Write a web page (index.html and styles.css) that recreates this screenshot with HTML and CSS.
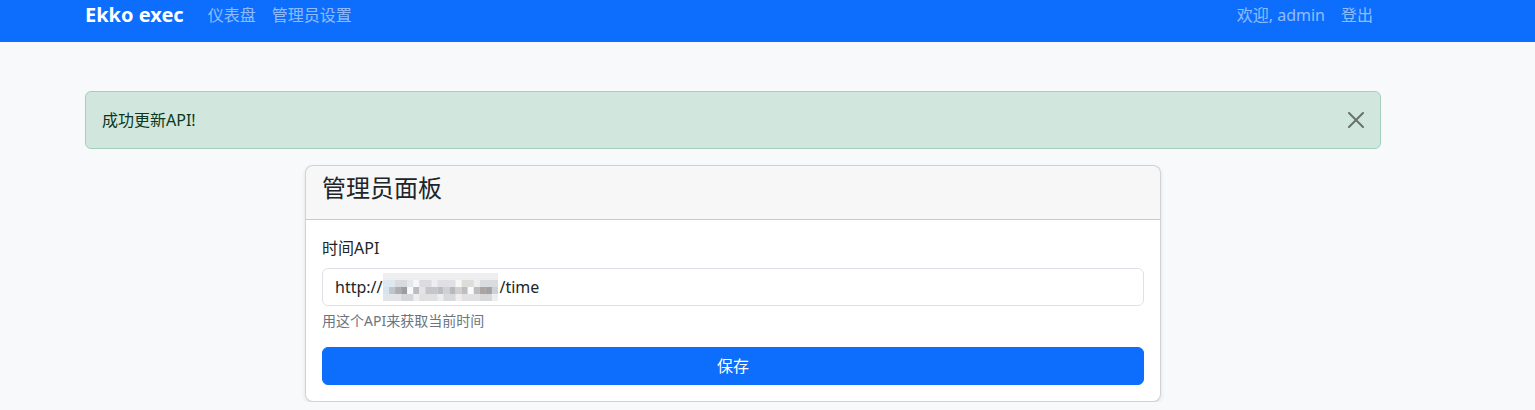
FILE: index.html
```html
<!DOCTYPE html>
<html lang="zh-CN">
<head>
<meta charset="utf-8">
<title>Ekko exec - 管理员面板</title>
<link rel="stylesheet" href="styles.css">
</head>
<body>
<nav class="navbar">
  <div class="container nav-inner">
    <a class="brand" href="#">Ekko exec</a>
    <ul class="nav-links">
      <li><a href="#">仪表盘</a></li>
      <li><a href="#">管理员设置</a></li>
    </ul>
    <ul class="nav-links nav-right">
      <li><a href="#">欢迎, admin</a></li>
      <li><a href="#">登出</a></li>
    </ul>
  </div>
</nav>
<main class="container main">
  <div class="alert">
    <span>成功更新API!</span>
    <button class="btn-close" aria-label="Close">
      <svg viewBox="0 0 16 16" width="16" height="16"><path fill="currentColor" d="M.293.293a1 1 0 0 1 1.414 0L8 6.586 14.293.293a1 1 0 1 1 1.414 1.414L9.414 8l6.293 6.293a1 1 0 0 1-1.414 1.414L8 9.414l-6.293 6.293a1 1 0 0 1-1.414-1.414L6.586 8 .293 1.707a1 1 0 0 1 0-1.414z"/></svg>
    </button>
  </div>
  <div class="card">
    <div class="card-header"><h4>管理员面板</h4></div>
    <div class="card-body">
      <div class="field">
        <label class="form-label">时间API</label>
        <div class="form-control">http://<span class="mosaic"><svg width="115" height="28" viewBox="0 0 19 4" preserveAspectRatio="none">
          <rect width="19" height="4" fill="#eeeef1"/>
          <rect x="0" y="1" width="2" height="1" fill="#dde8f1"/>
          <rect x="2" y="1" width="2" height="1" fill="#d9dadd"/>
          <rect x="4" y="1" width="1" height="1" fill="#e6e7ea"/>
          <rect x="5" y="1" width="1" height="1" fill="#f7f7f7"/>
          <rect x="6" y="1" width="2" height="1" fill="#dcdce0"/>
          <rect x="9" y="1" width="3" height="1" fill="#e0e0e4"/>
          <rect x="12" y="1" width="1" height="1" fill="#f7f7f7"/>
          <rect x="13" y="1" width="2" height="1" fill="#dfdddc"/>
          <rect x="16" y="1" width="3" height="1" fill="#dadbdf"/>
          <rect x="0" y="2" width="1" height="1" fill="#d4e4f0"/>
          <rect x="1" y="2" width="1" height="1" fill="#c2c4c8"/>
          <rect x="2" y="2" width="1" height="1" fill="#adaeb2"/>
          <rect x="3" y="2" width="1" height="1" fill="#9c9da1"/>
          <rect x="4" y="2" width="1" height="1" fill="#fafafa"/>
          <rect x="5" y="2" width="1" height="1" fill="#bbbcc0"/>
          <rect x="6" y="2" width="1" height="1" fill="#e4e4e6"/>
          <rect x="7" y="2" width="2" height="1" fill="#c5c6ca"/>
          <rect x="9" y="2" width="1" height="1" fill="#bbbdc1"/>
          <rect x="10" y="2" width="1" height="1" fill="#d0d1d4"/>
          <rect x="11" y="2" width="1" height="1" fill="#b8b9bd"/>
          <rect x="12" y="2" width="1" height="1" fill="#d2d0ce"/>
          <rect x="13" y="2" width="1" height="1" fill="#bdbec2"/>
          <rect x="14" y="2" width="1" height="1" fill="#fbfbfb"/>
          <rect x="15" y="2" width="1" height="1" fill="#babcc0"/>
          <rect x="16" y="2" width="1" height="1" fill="#aca4a0"/>
          <rect x="17" y="2" width="1" height="1" fill="#a0a2a6"/>
          <rect x="18" y="2" width="1" height="1" fill="#cdd0d4"/>
          <rect x="0" y="3" width="3" height="1" fill="#e3e4e7"/>
          <rect x="3" y="3" width="2" height="1" fill="#d5d6d9"/>
          <rect x="6" y="3" width="3" height="1" fill="#e0e0e3"/>
          <rect x="10" y="3" width="2" height="1" fill="#d8d9dc"/>
          <rect x="13" y="3" width="3" height="1" fill="#e1e1e4"/>
          <rect x="16" y="3" width="2" height="1" fill="#d7d8db"/>
        </svg></span>/time</div>
        <div class="form-text">用这个API来获取当前时间</div>
      </div>
      <button class="btn-primary" type="button">保存</button>
    </div>
  </div>
</main>
</body>
</html>
```
FILE: styles.css
```css
* { box-sizing: border-box; }
html, body { margin: 0; padding: 0; }
body {
  background: #f8f9fa;
  color: #212529;
  font-family: "Segoe UI", "Noto Sans", "Noto Sans CJK SC", sans-serif;
  font-size: 16px;
  line-height: 1.5;
}
a { text-decoration: none; }
.container {
  width: 1320px;
  margin-left: 73px;
  padding: 0 12px;
}
.navbar {
  background: #0d6efd;
  height: 42px;
}
.nav-inner {
  display: flex;
  align-items: center;
  height: 30px;
}
.brand {
  color: #fff;
  font-weight: 700;
  font-size: 20px;
  line-height: 30px;
  margin-right: 16px;
}
.nav-links {
  display: flex;
  list-style: none;
  margin: 0;
  padding: 0;
}
.nav-links a {
  display: block;
  padding: 0 8px;
  line-height: 30px;
  color: rgba(255, 255, 255, 0.55);
}
.nav-right { margin-left: auto; }
.main { padding-top: 49px; }
.alert {
  position: relative;
  background: #d1e7dd;
  border: 1px solid #a3cfbb;
  color: #0a3622;
  border-radius: 6px;
  padding: 16px 48px 16px 16px;
  margin-bottom: 16px;
}
.btn-close {
  position: absolute;
  top: 0;
  right: 0;
  padding: 20px 16px;
  border: 0;
  background: transparent;
  color: #000;
  opacity: 0.5;
  display: flex;
}
.card {
  width: 856px;
  margin-left: 220px;
  background: #fff;
  border: 1px solid rgba(0, 0, 0, 0.175);
  border-radius: 8px;
  box-shadow: 0 2px 4px rgba(0, 0, 0, 0.1);
  overflow: hidden;
}
.card-header {
  background: rgba(0, 0, 0, 0.03);
  border-bottom: 1px solid rgba(0, 0, 0, 0.175);
  padding: 8px 16px;
}
.card-header h4 {
  margin: 0 0 8px;
  font-size: 24px;
  font-weight: 400;
  line-height: 1.2;
}
.card-body { padding: 16px; }
.field { margin-bottom: 16px; }
.form-label {
  display: block;
  margin-bottom: 8px;
}
.form-control {
  display: flex;
  align-items: center;
  height: 38px;
  padding: 6px 12px;
  border: 1px solid #dee2e6;
  border-radius: 6px;
  background: #fff;
}
.mosaic {
  display: inline-flex;
  margin: 0 1px;
}
.mosaic svg { display: block; }
.form-text {
  margin-top: 4px;
  font-size: 14px;
  color: #6c757d;
}
.btn-primary {
  display: block;
  width: 100%;
  height: 38px;
  border: 1px solid #0d6efd;
  background: #0d6efd;
  color: #fff;
  border-radius: 6px;
  font: inherit;
  line-height: 1.5;
}
```
